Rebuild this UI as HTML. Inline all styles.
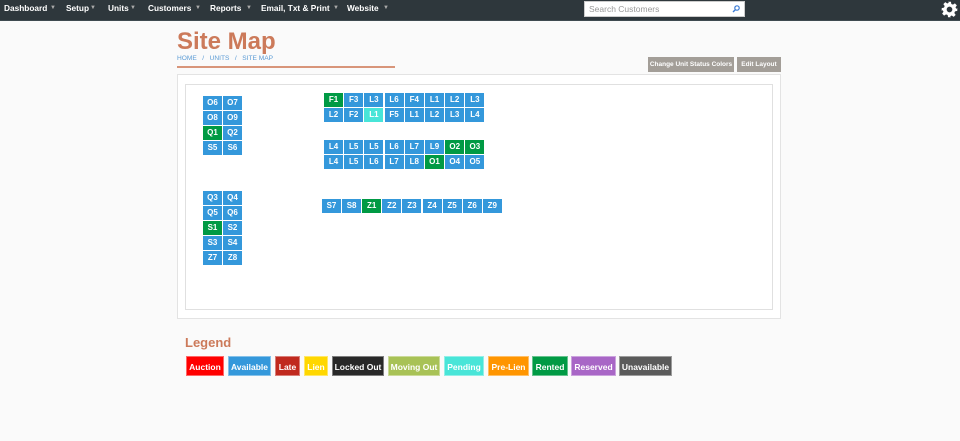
<!DOCTYPE html>
<html><head><meta charset="utf-8"><style>
*{margin:0;padding:0;box-sizing:border-box}
body{width:960px;height:441px;background:#fafafa;font-family:"Liberation Sans",Arial,sans-serif;position:relative;overflow:hidden}
.nav{position:absolute;left:0;top:0;width:960px;height:21px;background:#2e373c;border-bottom:1px solid #3f4a50}
.nav span{position:absolute;top:3px;color:#fff;font-size:8.3px;font-weight:bold;white-space:nowrap}
.nav b{position:absolute;top:5px;color:#aaa;font-size:6px}
.search{position:absolute;left:584px;top:1px;width:161px;height:16px;background:#fff;border:1px solid #ccc;font-size:8.5px;color:#999;padding:2px 4px}
.a{position:absolute}
.u{position:absolute;width:19px;height:14px;background:#3498db;color:#fff;font-size:8px;font-weight:bold;text-align:center;line-height:14px}
.g{background:#009a44}.p{background:#48e5d8}
.lg{position:absolute;top:356px;height:20px;color:#fff;font-size:8.5px;font-weight:bold;line-height:20px;text-align:center;border:1px solid rgba(255,255,255,.4)}
.btn{position:absolute;top:57px;height:15px;background:#a39e98;color:#fff;font-size:6.5px;font-weight:bold;line-height:15px;text-align:center}
</style></head><body>
<div class="nav">
<span style="left:4px">Dashboard</span><b style="left:50px">▼</b>
<span style="left:66px">Setup</span><b style="left:90px">▼</b>
<span style="left:108px">Units</span><b style="left:130px">▼</b>
<span style="left:148px">Customers</span><b style="left:195px">▼</b>
<span style="left:210px">Reports</span><b style="left:246px">▼</b>
<span style="left:261px">Email, Txt &amp; Print</span><b style="left:333px">▼</b>
<span style="left:347px">Website</span><b style="left:383px">▼</b>
<div class="search">Search Customers<svg style="position:absolute;right:4px;top:3px" width="8" height="8" viewBox="0 0 8 8"><circle cx="5" cy="3" r="2.2" fill="none" stroke="#3a7bd5" stroke-width="1.2"/><path d="M3.4 4.6L1 7" stroke="#3a7bd5" stroke-width="1.4"/></svg></div>
<svg style="position:absolute;left:941px;top:1px" width="17" height="17" viewBox="0 0 24 24"><path fill="#fff" d="M10 1h4l.6 3.2 2.3 1 2.7-1.9 2.8 2.8-1.9 2.7 1 2.3L23 10v4l-3.2.6-1 2.3 1.9 2.7-2.8 2.8-2.7-1.9-2.3 1L14 23h-4l-.6-3.2-2.300-1-2.7 1.9-2.8-2.8 1.9-2.7-1-2.3L1 14v-4l3.2-.6 1-2.3-1.9-2.7 2.8-2.8 2.7 1.9 2.3-1z"/><circle cx="12" cy="12" r="4" fill="#2e373c"/></svg>
</div>
<div class="a" style="left:177px;top:28px;font-size:24px;font-weight:bold;color:#cc7a5a">Site Map</div>
<div class="a" style="left:177px;top:55px;font-size:6.6px;color:#5b9bd5">HOME &nbsp; / &nbsp; UNITS &nbsp; / &nbsp; SITE MAP</div>
<div class="a" style="left:177px;top:66px;width:218px;height:2px;background:#d8957a"></div>
<div class="btn" style="left:648px;width:86px">Change Unit Status Colors</div>
<div class="btn" style="left:737px;width:44px">Edit Layout</div>
<div class="a" style="left:177px;top:74px;width:604px;height:245px;background:#fff;border:1px solid #e3e3e3"></div>
<div class="a" style="left:185px;top:84px;width:588px;height:226px;background:#fff;border:1px solid #e0e0e0"></div>
<div id="u"></div>
<div class="a" style="left:185px;top:335px;font-size:13px;font-weight:bold;color:#cc7a5a">Legend</div>
<div class="lg" style="left:186px;width:38px;background:#f00">Auction</div>
<div class="lg" style="left:228px;width:43px;background:#3498db">Available</div>
<div class="lg" style="left:275px;width:25px;background:#c0291e">Late</div>
<div class="lg" style="left:304px;width:24px;background:#ffd700">Lien</div>
<div class="lg" style="left:332px;width:52px;background:#282828">Locked Out</div>
<div class="lg" style="left:388px;width:52px;background:#a8c256">Moving Out</div>
<div class="lg" style="left:444px;width:40px;background:#48e5d8">Pending</div>
<div class="lg" style="left:488px;width:41px;background:#ff9500">Pre-Lien</div>
<div class="lg" style="left:532px;width:36px;background:#009a44">Rented</div>
<div class="lg" style="left:571px;width:45px;background:#a866c6">Reserved</div>
<div class="lg" style="left:619px;width:53px;background:#5a5a5a">Unavailable</div>
<script>
var d=[
[203,96,20,15,[["O6","O7"],["O8","O9"],["Q1g","Q2"],["S5","S6"]]],
[203,191,20,15,[["Q3","Q4"],["Q5","Q6"],["S1g","S2"],["S3","S4"],["Z7","Z8"]]],
[324,93,20.2,15,[["F1g","F3","L3","L6","F4","L1","L2","L3"],["L2","F2","L1p","F5","L1","L2","L3","L4"]]],
[324,140,20.2,15,[["L4","L5","L5","L6","L7","L9","O2g","O3g"],["L4","L5","L6","L7","L8","O1g","O4","O5"]]],
[322,199,20.1,15,[["S7","S8","Z1g","Z2","Z3","Z4","Z5","Z6","Z9"]]]];
var h="";d.forEach(function(b){b[4].forEach(function(r,ri){r.forEach(function(c,ci){var cl="u",t=c;if(c.length==3){cl+=" "+c[2];t=c.slice(0,2);}h+='<div class="'+cl+'" style="left:'+(b[0]+ci*b[2])+'px;top:'+(b[1]+ri*b[3])+'px">'+t+'</div>';});});});
document.getElementById("u").innerHTML=h;
</script>
</body></html>
